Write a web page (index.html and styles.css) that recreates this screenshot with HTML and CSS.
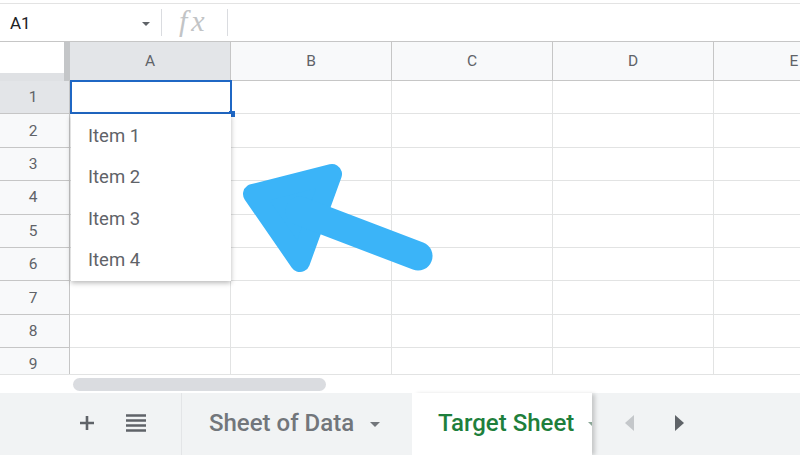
FILE: index.html
```html
<!DOCTYPE html>
<html>
<head>
<meta charset="utf-8">
<link rel="stylesheet" href="styles.css">
</head>
<body>
<div class="app">
  <div class="formula">
    <div class="namebox">
      <span class="ref">A1</span>
      <span class="caret"></span>
    </div>
    <div class="fx">fx</div>
    <div class="input"></div>
  </div>

  <div class="gridwrap">
    <div class="grid">
      <div class="corner"><div class="corner-in"></div></div>
      <div class="ch sel">A</div>
      <div class="ch">B</div>
      <div class="ch">C</div>
      <div class="ch">D</div>
      <div class="ch">E</div>

      <div class="rh sel">1</div><div class="c"></div><div class="c"></div><div class="c"></div><div class="c"></div><div class="c"></div>
      <div class="rh">2</div><div class="c"></div><div class="c"></div><div class="c"></div><div class="c"></div><div class="c"></div>
      <div class="rh">3</div><div class="c"></div><div class="c"></div><div class="c"></div><div class="c"></div><div class="c"></div>
      <div class="rh">4</div><div class="c"></div><div class="c"></div><div class="c"></div><div class="c"></div><div class="c"></div>
      <div class="rh">5</div><div class="c"></div><div class="c"></div><div class="c"></div><div class="c"></div><div class="c"></div>
      <div class="rh">6</div><div class="c"></div><div class="c"></div><div class="c"></div><div class="c"></div><div class="c"></div>
      <div class="rh">7</div><div class="c"></div><div class="c"></div><div class="c"></div><div class="c"></div><div class="c"></div>
      <div class="rh">8</div><div class="c"></div><div class="c"></div><div class="c"></div><div class="c"></div><div class="c"></div>
      <div class="rh">9</div><div class="c"></div><div class="c"></div><div class="c"></div><div class="c"></div><div class="c"></div>
    </div>
  </div>

  <div class="scroll">
    <div class="scroll-left"></div>
    <div class="track"><div class="thumb"></div></div>
  </div>

  <div class="tabs">
    <div class="tools">
      <svg class="plus" width="16" height="16" viewBox="0 0 16 16"><path d="M8 1v14M1 8h14" stroke="#5f6368" stroke-width="2.6" fill="none"/></svg>
      <svg class="list" width="20" height="18" viewBox="0 0 20 18"><path d="M0 1.5h20M0 6.5h20M0 11.5h20M0 16.5h20" stroke="#5f6368" stroke-width="2.6" fill="none"/></svg>
    </div>
    <div class="tab">
      <span class="tab-name">Sheet of Data</span>
      <span class="tab-caret"></span>
    </div>
    <div class="tab active">
      <span class="tab-name">Target Sheet</span>
      <span class="tab-caret green"></span>
    </div>
    <div class="nav">
      <svg width="10" height="16" viewBox="0 0 10 16"><path d="M9 0v16L0 8z" fill="#c4c7ca"/></svg>
      <svg width="10" height="16" viewBox="0 0 10 16"><path d="M1 0v16l9-8z" fill="#5f6368"/></svg>
    </div>
  </div>

  <div class="selection"><span class="handle"></span></div>

  <div class="dropdown">
    <div class="item">Item 1</div>
    <div class="item">Item 2</div>
    <div class="item">Item 3</div>
    <div class="item">Item 4</div>
  </div>

  <svg class="arrow" width="800" height="455" viewBox="0 0 800 455">
    <g fill="#3bb4f8" stroke="#3bb4f8" stroke-linejoin="round" stroke-linecap="round">
      <polygon points="253,194 332,174 300,262" stroke-width="20"/>
      <line x1="300" y1="211" x2="418" y2="256" stroke-width="29"/>
    </g>
  </svg>
</div>
</body>
</html>
```

FILE: styles.css
```css
* { box-sizing: border-box; }
html, body { margin: 0; padding: 0; }
body {
  width: 800px;
  height: 455px;
  overflow: hidden;
  background: #ffffff;
  font-family: Roboto, "Liberation Sans", Arial, sans-serif;
}
.app {
  position: relative;
  width: 800px;
  height: 455px;
  overflow: hidden;
}

/* formula bar */
.formula {
  margin-top: 3px;
  height: 39px;
  border-top: 1px solid #e3e3e3;
  border-bottom: 1px solid #c6c6c6;
  display: flex;
  align-items: center;
}
.namebox {
  width: 162px;
  height: 27px;
  display: flex;
  align-items: center;
  justify-content: space-between;
  padding: 0 11px 0 10px;
  border-right: 1px solid #dadce0;
}
.ref {
  font-size: 17px;
  color: #202124;
}
.caret {
  width: 0;
  height: 0;
  border-left: 4.5px solid transparent;
  border-right: 4.5px solid transparent;
  border-top: 4.5px solid #5f6368;
  margin-top: 2px;
}
.fx {
  width: 66px;
  height: 27px;
  border-right: 1px solid #dadce0;
  font-family: "Liberation Serif", "DejaVu Serif", serif;
  font-style: italic;
  font-size: 30px;
  line-height: 24px;
  color: #c2c4c6;
  padding-left: 17px;
  letter-spacing: 4px;
}
.input { flex: 1; }

/* grid */
.gridwrap {
  height: 332px;
  overflow: hidden;
}
.grid {
  display: grid;
  grid-template-columns: 70px repeat(5, 161px);
  grid-template-rows: 39px repeat(9, 33.4px);
  width: 875px;
}
.corner {
  background: #dfe1e4;
  border-right: 6px solid #c4c6c8;
}
.corner-in {
  height: 31px;
  background: #ffffff;
}
.ch {
  background: #f8f9fa;
  border-right: 1px solid #c6c6c6;
  border-bottom: 1px solid #c6c6c6;
  display: flex;
  align-items: center;
  justify-content: center;
  font-size: 15.5px;
  color: #5f6368;
}
.rh {
  background: #f8f9fa;
  border-right: 1px solid #c6c6c6;
  border-bottom: 1px solid #c6c6c6;
  display: flex;
  align-items: center;
  justify-content: center;
  font-size: 15.5px;
  color: #5f6368;
  padding-right: 3px;
}
.ch.sel, .rh.sel { background: #e3e5e8; }
.c {
  border-right: 1px solid #e2e3e3;
  border-bottom: 1px solid #e2e3e3;
}

/* scroll */
.scroll {
  height: 19px;
  display: flex;
  border-top: 1px solid #e2e3e3;
}
.scroll-left { width: 70px; }
.track { flex: 1; padding: 3px 0 0 3px; }
.thumb {
  width: 253px;
  height: 13px;
  border-radius: 7px;
  background: #dadce0;
}

/* tabs */
.tabs {
  height: 63px;
  background: #f1f3f4;
  display: flex;
  align-items: stretch;
}
.tools {
  width: 182px;
  display: flex;
  align-items: center;
  padding-left: 79px;
  padding-bottom: 3px;
  gap: 31px;
  border-right: 1px solid #e3e5e7;
}
.tab {
  display: flex;
  align-items: center;
  font-size: 24px;
  font-weight: 500;
  color: #72767b;
  width: 230px;
  padding-left: 27px;
  padding-bottom: 3px;
  gap: 16px;
  white-space: nowrap;
}
.tab.active {
  background: #ffffff;
  color: #1e7f3c;
  width: 180px;
  padding-left: 26px;
  gap: 14px;
  overflow: hidden;
  box-shadow: 4px 0 4px -1px rgba(0,0,0,0.18);
  position: relative;
}
.tab-caret {
  flex: none;
  width: 0;
  height: 0;
  border-left: 5.5px solid transparent;
  border-right: 5.5px solid transparent;
  border-top: 5.5px solid #72767b;
  margin-top: 3px;
}
.tab-caret.green { border-top-color: #8aa696; }
.nav {
  display: flex;
  align-items: center;
  gap: 39px;
  padding-left: 33px;
  padding-bottom: 3px;
}

/* overlays */
.selection {
  position: absolute;
  left: 70px;
  top: 80px;
  width: 162px;
  height: 34px;
  border: 2px solid #1f67c4;
}
.handle {
  position: absolute;
  right: -5px;
  bottom: -5px;
  width: 6px;
  height: 6px;
  background: #1f67c4;
}
.dropdown {
  position: absolute;
  left: 71px;
  top: 114px;
  width: 160px;
  height: 167px;
  background: #ffffff;
  box-shadow: 0 2px 5px rgba(0,0,0,0.28);
  padding-top: 1px;
}
.item {
  height: 41.5px;
  display: flex;
  align-items: center;
  padding-left: 17px;
  font-size: 18.5px;
  color: #5f6368;
}
.arrow {
  position: absolute;
  left: 0;
  top: 0;
  pointer-events: none;
}
```
